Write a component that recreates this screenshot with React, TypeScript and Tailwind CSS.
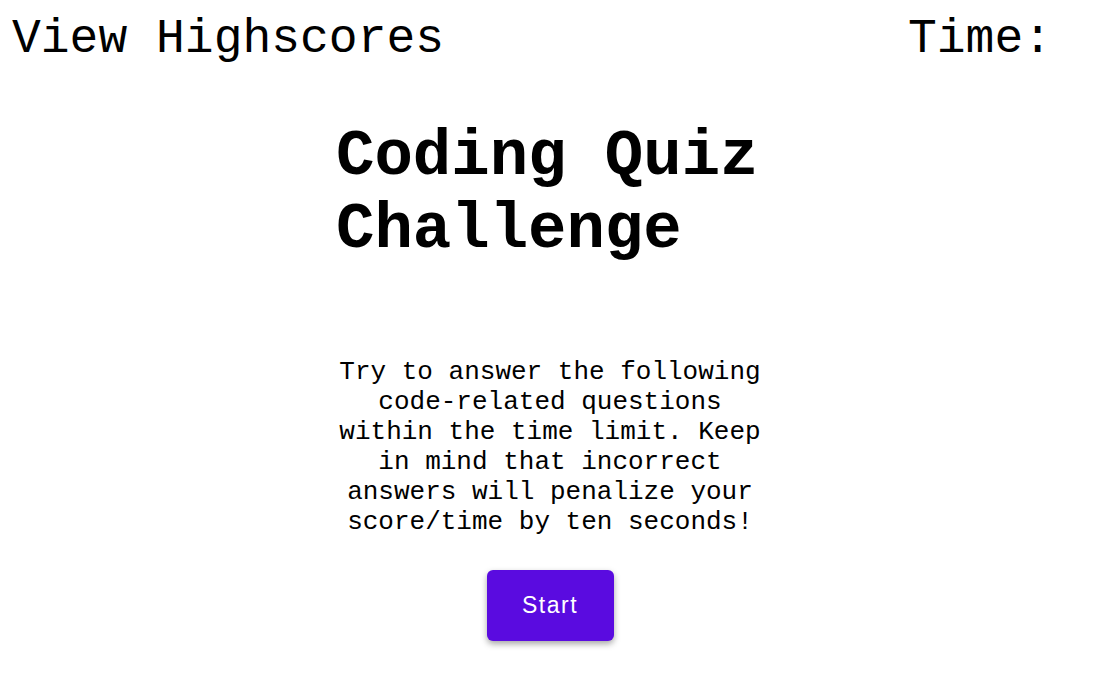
export default function App() {
  return (
    <div className="min-h-screen bg-white text-black" style={{ fontFamily: '"Liberation Mono", "Courier New", monospace' }}>
      <header className="flex justify-between pt-3 pl-3 pr-12 text-[48px] leading-[54px]">
        <a href="#" className="text-black">View Highscores</a>
        <div>Time: <span id="time"></span></div>
      </header>

      <main className="mx-auto mt-[55px] w-[440px]">
        <h1 className="pl-1.5 text-[64px] font-bold leading-[73px]">Coding Quiz Challenge</h1>
        <p className="mt-[90px] text-center text-[26px] leading-[30px]">
          Try to answer the following code-related questions within the time limit. Keep in mind that incorrect answers will penalize your score/time by ten seconds!
        </p>
        <div className="mt-[33px] flex justify-center">
          <button
            className="h-[71px] w-[127px] rounded-md bg-[#5a0be0] text-[23px] tracking-[1.5px] text-white shadow-[0_3px_6px_rgba(0,0,0,0.35)]"
            style={{ fontFamily: '"Liberation Sans", Arial, sans-serif' }}
          >
            Start
          </button>
        </div>
      </main>
    </div>
  );
}
